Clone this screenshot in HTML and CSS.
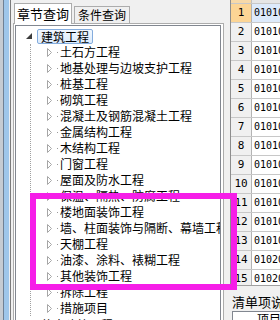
FILE: index.html
```html
<!DOCTYPE html>
<html>
<head>
<meta charset="utf-8">
<link rel="stylesheet" href="styles.css">
</head>
<body>
<div class="app">
  <div class="strip"></div>
  <div class="tabctl">
    <div class="tabs">
      <div class="tab active">章节查询</div>
      <div class="tab">条件查询</div>
    </div>
    <div class="page">
      <div class="tree">
        <div class="root-row">
          <svg class="exp" width="7" height="7" viewBox="0 0 7 7"><polygon points="6,0 6,6 0,6" fill="#3c3c3c"/></svg>
          <span class="sel">建筑工程</span>
        </div>
        <div class="children">
          <div class="row"><svg class="col" width="6" height="9" viewBox="0 0 6 9"><path d="M0.5 0.5 L4.5 4.5 L0.5 8.5 Z" fill="#fff" stroke="#a6a6a6"/></svg><i class="dot"></i><span class="lbl">土石方工程</span></div>
          <div class="row"><svg class="col" width="6" height="9" viewBox="0 0 6 9"><path d="M0.5 0.5 L4.5 4.5 L0.5 8.5 Z" fill="#fff" stroke="#a6a6a6"/></svg><i class="dot"></i><span class="lbl">地基处理与边坡支护工程</span></div>
          <div class="row"><svg class="col" width="6" height="9" viewBox="0 0 6 9"><path d="M0.5 0.5 L4.5 4.5 L0.5 8.5 Z" fill="#fff" stroke="#a6a6a6"/></svg><i class="dot"></i><span class="lbl">桩基工程</span></div>
          <div class="row"><svg class="col" width="6" height="9" viewBox="0 0 6 9"><path d="M0.5 0.5 L4.5 4.5 L0.5 8.5 Z" fill="#fff" stroke="#a6a6a6"/></svg><i class="dot"></i><span class="lbl">砌筑工程</span></div>
          <div class="row"><svg class="col" width="6" height="9" viewBox="0 0 6 9"><path d="M0.5 0.5 L4.5 4.5 L0.5 8.5 Z" fill="#fff" stroke="#a6a6a6"/></svg><i class="dot"></i><span class="lbl">混凝土及钢筋混凝土工程</span></div>
          <div class="row"><svg class="col" width="6" height="9" viewBox="0 0 6 9"><path d="M0.5 0.5 L4.5 4.5 L0.5 8.5 Z" fill="#fff" stroke="#a6a6a6"/></svg><i class="dot"></i><span class="lbl">金属结构工程</span></div>
          <div class="row"><svg class="col" width="6" height="9" viewBox="0 0 6 9"><path d="M0.5 0.5 L4.5 4.5 L0.5 8.5 Z" fill="#fff" stroke="#a6a6a6"/></svg><i class="dot"></i><span class="lbl">木结构工程</span></div>
          <div class="row"><svg class="col" width="6" height="9" viewBox="0 0 6 9"><path d="M0.5 0.5 L4.5 4.5 L0.5 8.5 Z" fill="#fff" stroke="#a6a6a6"/></svg><i class="dot"></i><span class="lbl">门窗工程</span></div>
          <div class="row"><svg class="col" width="6" height="9" viewBox="0 0 6 9"><path d="M0.5 0.5 L4.5 4.5 L0.5 8.5 Z" fill="#fff" stroke="#a6a6a6"/></svg><i class="dot"></i><span class="lbl">屋面及防水工程</span></div>
          <div class="row"><svg class="col" width="6" height="9" viewBox="0 0 6 9"><path d="M0.5 0.5 L4.5 4.5 L0.5 8.5 Z" fill="#fff" stroke="#a6a6a6"/></svg><i class="dot"></i><span class="lbl">保温、隔热、防腐工程</span></div>
          <div class="row"><svg class="col" width="6" height="9" viewBox="0 0 6 9"><path d="M0.5 0.5 L4.5 4.5 L0.5 8.5 Z" fill="#fff" stroke="#a6a6a6"/></svg><i class="dot"></i><span class="lbl">楼地面装饰工程</span></div>
          <div class="row"><svg class="col" width="6" height="9" viewBox="0 0 6 9"><path d="M0.5 0.5 L4.5 4.5 L0.5 8.5 Z" fill="#fff" stroke="#a6a6a6"/></svg><i class="dot"></i><span class="lbl">墙、柱面装饰与隔断、幕墙工程</span></div>
          <div class="row"><svg class="col" width="6" height="9" viewBox="0 0 6 9"><path d="M0.5 0.5 L4.5 4.5 L0.5 8.5 Z" fill="#fff" stroke="#a6a6a6"/></svg><i class="dot"></i><span class="lbl">天棚工程</span></div>
          <div class="row"><svg class="col" width="6" height="9" viewBox="0 0 6 9"><path d="M0.5 0.5 L4.5 4.5 L0.5 8.5 Z" fill="#fff" stroke="#a6a6a6"/></svg><i class="dot"></i><span class="lbl">油漆、涂料、裱糊工程</span></div>
          <div class="row"><svg class="col" width="6" height="9" viewBox="0 0 6 9"><path d="M0.5 0.5 L4.5 4.5 L0.5 8.5 Z" fill="#fff" stroke="#a6a6a6"/></svg><i class="dot"></i><span class="lbl">其他装饰工程</span></div>
          <div class="row"><svg class="col" width="6" height="9" viewBox="0 0 6 9"><path d="M0.5 0.5 L4.5 4.5 L0.5 8.5 Z" fill="#fff" stroke="#a6a6a6"/></svg><i class="dot"></i><span class="lbl">拆除工程</span></div>
          <div class="row"><svg class="col" width="6" height="9" viewBox="0 0 6 9"><path d="M0.5 0.5 L4.5 4.5 L0.5 8.5 Z" fill="#fff" stroke="#a6a6a6"/></svg><i class="dot"></i><span class="lbl">措施项目</span></div>
        </div>
        <div class="root-row">
          <span class="exp-space"></span>
          <span class="plain">仿古建筑工程</span>
        </div>
      </div>
    </div>
  </div>
  <div class="splitter"></div>
  <div class="side">
    <div class="grid">
      <div class="ghead"><span class="gh-num"></span><span class="gh-code"></span></div>
      <div class="grow current"><span class="num">1</span><span class="code">010101001</span></div>
      <div class="grow"><span class="num">2</span><span class="code">010101002</span></div>
      <div class="grow"><span class="num">3</span><span class="code">010101003</span></div>
      <div class="grow"><span class="num">4</span><span class="code">010101004</span></div>
      <div class="grow"><span class="num">5</span><span class="code">010101005</span></div>
      <div class="grow"><span class="num">6</span><span class="code">010101006</span></div>
      <div class="grow"><span class="num">7</span><span class="code">010101007</span></div>
      <div class="grow"><span class="num">8</span><span class="code">010101008</span></div>
      <div class="grow"><span class="num">9</span><span class="code">010101009</span></div>
      <div class="grow"><span class="num">10</span><span class="code">010102001</span></div>
      <div class="grow"><span class="num">11</span><span class="code">010102002</span></div>
      <div class="grow"><span class="num">12</span><span class="code">010103001</span></div>
      <div class="grow"><span class="num">13</span><span class="code">010103002</span></div>
      <div class="grow"><span class="num">14</span><span class="code">010201001</span></div>
      <div class="grow"><span class="num">15</span><span class="code">010201002</span></div>
    </div>
    <div class="desc">
      <div class="desc-title">清单项说明</div>
      <div class="desc-box"><div class="desc-head">项目</div></div>
    </div>
  </div>
</div>
<div class="mark"></div>
</body>
</html>
```
FILE: styles.css
```css
html, body {
  margin: 0;
  padding: 0;
}
body {
  width: 280px;
  height: 320px;
  overflow: hidden;
  position: relative;
  background: #f0f0f0;
  font-family: "Noto Sans CJK SC", "Liberation Sans", sans-serif;
  font-size: 12px;
  color: #000;
}
.app {
  display: flex;
  height: 320px;
  overflow: hidden;
}
.strip {
  width: 13px;
  flex: none;
  background: linear-gradient(to right, #c5cbd2 0 3px, #6f8093 3px 4px, #9ec6ea 4px 9px, #e9eef3 9px 10px, #7b7b7b 10px 11px, #f0f0f0 11px 13px);
}
.tabctl {
  width: 211px;
  flex: none;
  display: flex;
  flex-direction: column;
  min-height: 0;
}
.tabs {
  height: 23px;
  flex: none;
  display: flex;
  align-items: flex-end;
  padding-left: 1px;
  gap: 2px;
  position: relative;
  z-index: 1;
}
.tab {
  box-sizing: border-box;
  width: 56px;
  height: 17px;
  border: 1px solid #acacac;
  border-bottom: none;
  background: #f0f0f0;
  line-height: 16px;
  text-align: center;
  font-size: 12px;
}
.tab.active {
  width: 58px;
  height: 21px;
  margin-bottom: -1px;
  background: #fff;
  line-height: 20px;
  font-size: 13px;
}
.page {
  flex: 1;
  display: flex;
  border: 1px solid #acacac;
  border-bottom: none;
  background: #fff;
  padding: 1px 2px 0 1px;
  min-height: 0;
}
.tree {
  flex: 1;
  border: 1px solid #828790;
  border-bottom: none;
  background: #fff;
  overflow: hidden;
  padding-top: 2px;
}
.root-row {
  height: 16px;
  display: flex;
  align-items: center;
  padding-left: 10px;
  white-space: nowrap;
}
.exp {
  flex: none;
  margin-right: 4px;
  margin-top: 1px;
}
.exp-space {
  width: 11px;
  flex: none;
}
.sel {
  box-sizing: border-box;
  height: 15px;
  line-height: 13px;
  padding: 0 3px;
  border: 1px solid #84acdd;
  border-radius: 2px;
  background: linear-gradient(#f2f8fe, #dcebfc);
}
.plain {
  padding-left: 4px;
  line-height: 13px;
}
.children {
  margin-left: 14px;
  border-left: 1px dotted #a0a0a0;
}
.row {
  height: 16px;
  display: flex;
  align-items: center;
  padding-left: 16px;
  white-space: nowrap;
}
.col {
  flex: none;
}
.dot {
  width: 1px;
  height: 1px;
  background: #9a9a9a;
  margin-left: 4px;
  margin-right: 2px;
  flex: none;
}
.lbl {
  line-height: 14px;
}
.splitter {
  width: 6px;
  flex: none;
  background: #f0f0f0;
}
.side {
  flex: 1;
  display: flex;
  flex-direction: column;
  min-width: 0;
}
.grid {
  height: 285px;
  flex: none;
  overflow: hidden;
  border-left: 1px solid #8d8d8d;
  border-bottom: 1px solid #a0a0a0;
  background: #fff;
}
.ghead {
  height: 3px;
  display: flex;
}
.gh-num {
  width: 20px;
  background: #f7d9a8;
  border-right: 1px solid #c0c0c0;
}
.gh-code {
  flex: 1;
  background: #e6e6e6;
}
.grow {
  height: 19px;
  display: flex;
  box-sizing: border-box;
  border-top: 1px solid #c8c8c8;
  font-family: "DejaVu Sans Mono", "Liberation Mono", monospace;
  font-size: 10px;
}
.num {
  width: 20px;
  flex: none;
  background: #f0f0f0;
  border-right: 1px solid #b4b4b4;
  text-align: center;
  line-height: 18px;
  font-size: 11px;
}
.code {
  flex: 1;
  padding-left: 2px;
  line-height: 18px;
  white-space: nowrap;
  overflow: hidden;
}
.grow.current .num {
  background: #fcd595;
}
.grow.current .code {
  background: #ddeafb;
}
.desc {
  flex: 1;
  padding: 8px 0 0 2px;
  min-height: 0;
  overflow: hidden;
}
.desc-title {
  white-space: nowrap;
  line-height: 16px;
  height: 16px;
  overflow: hidden;
  font-size: 13px;
}
.desc-box {
  margin-top: 1px;
  border: 1px solid #828790;
  border-right: none;
  background: #fff;
  height: 40px;
}
.desc-head {
  padding-left: 24px;
  white-space: nowrap;
  line-height: 14px;
}
.mark {
  position: absolute;
  left: 30px;
  top: 193px;
  width: 207px;
  height: 97px;
  box-sizing: border-box;
  border: 6px solid #f61ee8;
}
```
